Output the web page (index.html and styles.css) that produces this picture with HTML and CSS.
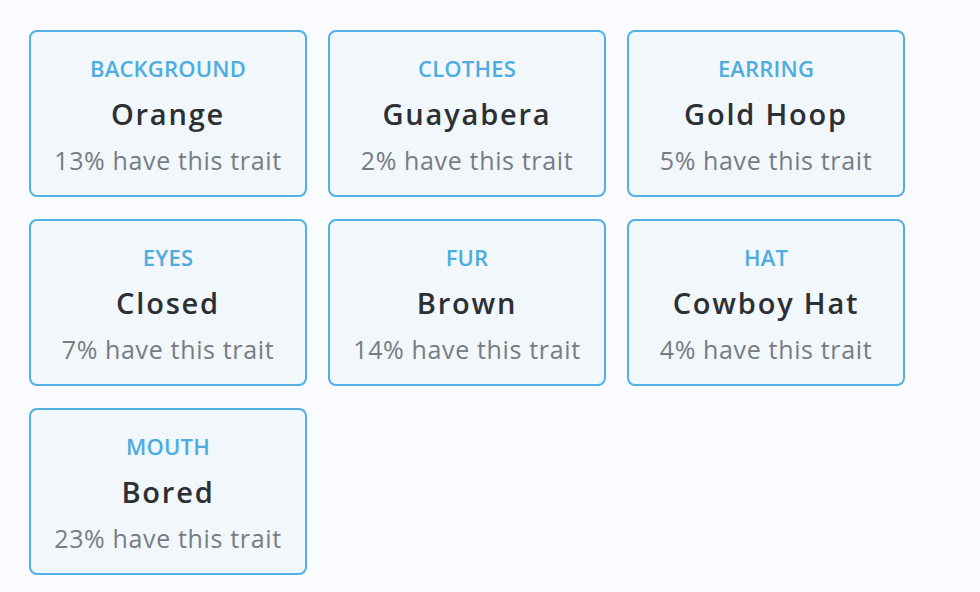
FILE: index.html
```html
<!DOCTYPE html>
<html lang="en">
<head>
<meta charset="utf-8">
<title>Traits</title>
<link rel="stylesheet" href="styles.css">
</head>
<body>
<main class="traits">
  <div class="trait"><div class="trait-type">Background</div><div class="trait-value">Orange</div><div class="trait-rarity">13% have this trait</div></div>
  <div class="trait"><div class="trait-type">Clothes</div><div class="trait-value">Guayabera</div><div class="trait-rarity">2% have this trait</div></div>
  <div class="trait"><div class="trait-type">Earring</div><div class="trait-value">Gold Hoop</div><div class="trait-rarity">5% have this trait</div></div>
  <div class="trait"><div class="trait-type">Eyes</div><div class="trait-value">Closed</div><div class="trait-rarity">7% have this trait</div></div>
  <div class="trait"><div class="trait-type">Fur</div><div class="trait-value">Brown</div><div class="trait-rarity">14% have this trait</div></div>
  <div class="trait"><div class="trait-type">Hat</div><div class="trait-value">Cowboy Hat</div><div class="trait-rarity">4% have this trait</div></div>
  <div class="trait"><div class="trait-type">Mouth</div><div class="trait-value">Bored</div><div class="trait-rarity">23% have this trait</div></div>
</main>
</body>
</html>
```
FILE: styles.css
```css
html, body {
  margin: 0;
  padding: 0;
  background: #fafbfe;
}
body {
  font-family: "Open Sans", "Liberation Sans", sans-serif;
}
.traits {
  display: grid;
  grid-template-columns: repeat(3, 278px);
  grid-auto-rows: 167px;
  gap: 22px 21px;
  padding: 30px 0 0 29px;
}
.trait {
  box-sizing: border-box;
  border: 2px solid #52b0e2;
  border-radius: 8px;
  background: #f2f7fb;
  display: flex;
  flex-direction: column;
  align-items: center;
  justify-content: center;
  text-align: center;
}
.trait-type {
  color: #4dade1;
  font-size: 22px;
  font-weight: 600;
  letter-spacing: 0.2px;
  text-transform: uppercase;
  line-height: 46px;
}
.trait-value {
  color: #2c2f34;
  font-size: 29px;
  font-weight: 600;
  letter-spacing: 1.8px;
  line-height: 46px;
}
.trait-rarity {
  color: #777c84;
  font-size: 25px;
  font-weight: 400;
  letter-spacing: 0.65px;
  line-height: 46px;
}
```
